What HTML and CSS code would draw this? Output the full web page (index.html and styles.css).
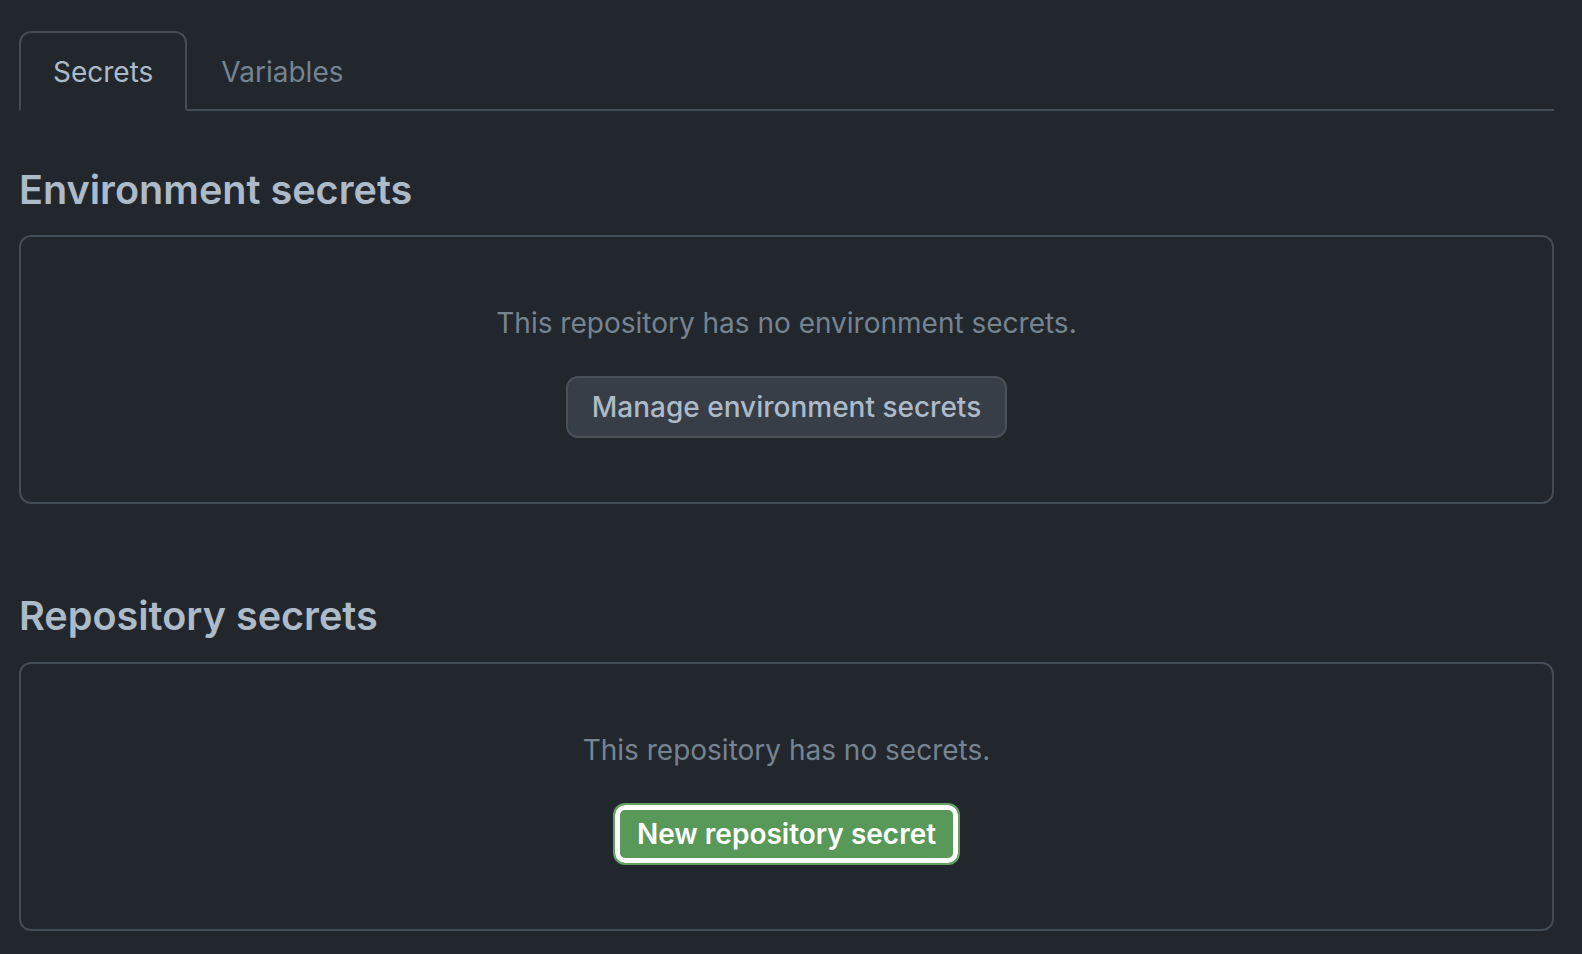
FILE: index.html
```html
<!DOCTYPE html>
<html lang="en">
<head>
<meta charset="utf-8">
<title>Secrets</title>
<link rel="stylesheet" href="styles.css">
</head>
<body>
<div class="page">
  <nav class="tabs">
    <a class="tab tab-selected">Secrets</a>
    <a class="tab">Variables</a>
  </nav>

  <h2 class="heading heading-first">Environment secrets</h2>
  <div class="box">
    <p class="blank-text">This repository has no environment secrets.</p>
    <button class="btn">Manage environment secrets</button>
  </div>

  <h2 class="heading heading-second">Repository secrets</h2>
  <div class="box">
    <p class="blank-text">This repository has no secrets.</p>
    <button class="btn btn-primary">New repository secret</button>
  </div>
</div>
</body>
</html>
```

FILE: styles.css
```css
html, body {
  margin: 0;
  padding: 0;
  background: #22272e;
}

body {
  font-family: Inter, "Noto Sans", "Liberation Sans", sans-serif;
  color: #adbac7;
}

.page {
  padding: 31px 28px 0 19px;
}

.tabs {
  display: flex;
  border-bottom: 2px solid #444c56;
}

.tab {
  display: block;
  box-sizing: border-box;
  height: 80px;
  margin-bottom: -2px;
  padding: 6px 32px 3px;
  line-height: 67px;
  font-size: 28px;
  color: #768390;
  border: 2px solid transparent;
  border-radius: 12px 12px 0 0;
}

.tab-selected {
  color: #adbac7;
  border-color: #444c56;
  border-bottom-color: #22272e;
  background: #22272e;
}

.heading {
  margin: 0;
  font-size: 39.6px;
  line-height: 48px;
  font-weight: 600;
  color: #adbac7;
}

.heading-first {
  margin-top: 55px;
  margin-bottom: 21px;
}

.heading-second {
  margin-top: 88px;
  margin-bottom: 22px;
}

.box {
  box-sizing: border-box;
  border: 2px solid #444c56;
  border-radius: 12px;
  padding: 65px 32px 64px;
  display: flex;
  flex-direction: column;
  align-items: center;
}

.blank-text {
  margin: 0 0 32px;
  font-size: 28px;
  line-height: 42px;
  color: #768390;
}

.btn {
  box-sizing: border-box;
  height: 62px;
  padding: 0 24px;
  font-family: inherit;
  font-size: 28px;
  font-weight: 500;
  line-height: 58px;
  color: #adbac7;
  background: #373e47;
  border: 2px solid #49505a;
  border-radius: 12px;
}

.btn-primary {
  height: 62px;
  line-height: 58px;
  font-weight: 600;
  color: #ffffff;
  background: #589858;
  border-color: #64a163;
  box-shadow: inset 0 0 0 5px #ffffff;
  padding: 0 22px;
}
```
